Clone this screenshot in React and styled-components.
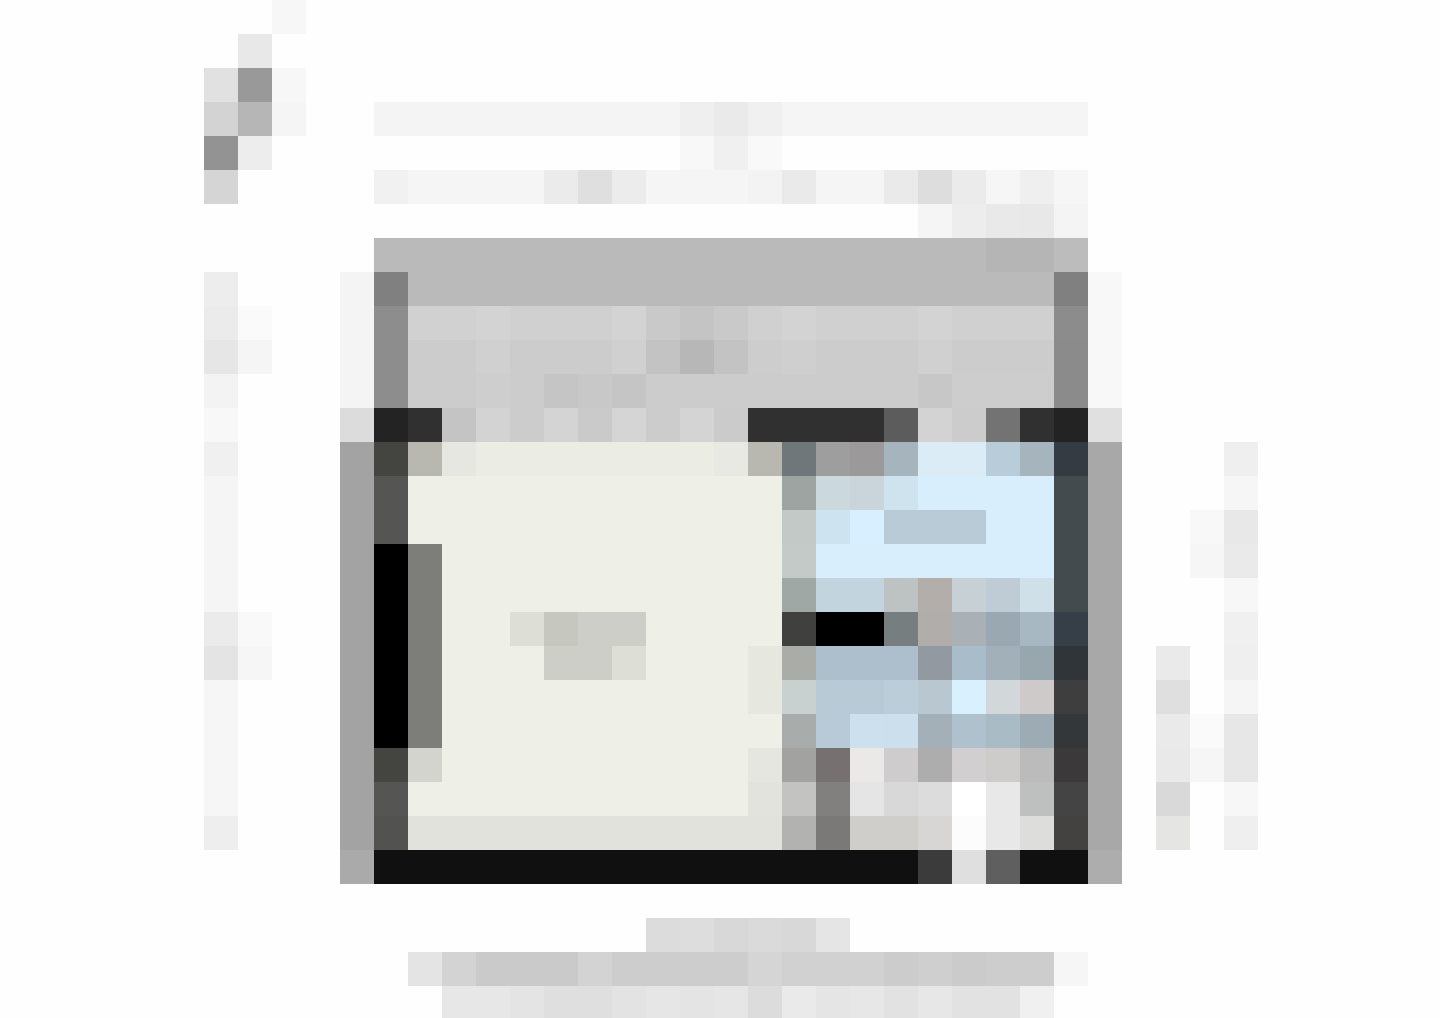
import React from "react";
import styled, { createGlobalStyle } from "styled-components";

const GlobalStyle = createGlobalStyle`
  body {
    margin: 0;
    background: #fefefe;
    font-family: "Liberation Sans", sans-serif;
  }
`;

const Page = styled.main`
  width: 100%;
  overflow: hidden;
`;

const Mosaic = styled.div`
  display: flex;
  flex-direction: column;
`;

/* 31 square tiles between two flexible margins */
const Row = styled.div`
  display: grid;
  grid-template-columns: minmax(0, 204fr) repeat(31, 34px) minmax(0, 182fr);
  height: ${(p) => (p.$last ? 32 : 34)}px;
`;

const Tile = styled.span`
  grid-row: 1;
  grid-column: ${(p) => p.$column} / span ${(p) => p.$span};
  background: ${(p) => p.$color};
`;

/* Each entry is "column[-lastColumn] hex"; two digits stand for a grey. */
const WALL = "10 a3,11 555553,12-22 eeefe6,32 a8";
const WALL_DARK = "10 a3,11 000000,12 7d7d7a,13-22 eeefe6,32 a8";

const ROWS = [
  "8 f7",
  "7 e8",
  "6 e1,7 99,8 f7",
  "6 d3,7 b6,8 f5,11-19 f4,20 ef,21 ea,22 f0,23-31 f5",
  "6 93,7 ed,20 f8,21 f0,22 f9",
  "6 d5,11 f1,12-15 f5,16 eb,17 df,18 ec,19-21 f5,22 f3,23 ea,24-25 f5,26 ea,27 dd,28 eb,29 f6,30 ef,31 f6",
  "27 f5,28 ed,29 e9,30 e8,31 f4",
  "11-28 ba,29-30 b5,31 bc",
  "6 ed,10 f4,11 80,12-30 ba,31 80,32 f8",
  "6 eb,7 fa,10 f4,11 8d,12-13 d1,14 d3,15-17 d0,18 d3,19 c9,20 c4,21 c9,22 d0,23 d3,24-26 d0,27 d3,28-30 d0,31 8c,32 f8",
  "6 e6,7 f5,10 f4,11 8d,12-13 cc,14 d0,15-17 cc,18 d0,19 c3,20 b7,21 c3,22 cd,23 cf,24-26 cc,27 d0,28-30 cc,31 8b,32 f8",
  "6 f3,10 f4,11 8d,12-13 cc,14 ce,15 cc,16 c5,17 c8,18 c5,19-26 cc,27 c7,28-30 cd,31 8b,32 f8",
  "6 f8,10 dc,11 23,12 30,13 c4,14 d3,15 cc,16 d4,17 ca,18 d5,19 cc,20 d4,21 cb,22-25 30,26 5c,27 d3,28 cc,29 73,30 30,31 23,32 e0",
  "6 f0,10 a3,11 444440,12 b8b8b1,13 e6e7e1,14-20 ebece4,21 e8e9e3,22 b8b7b0,23 70777a,24 9e9e9f,25 9b9999,26 a6b4be,27-28 dbecf7,29 b9ccda,30 a6b4be,31 353b42,32 a8,36 ef",
  `6 f5,${WALL},23 9da4a2,24 cbd8de,25 c9d5da,26 cfe3ef,27-30 d8eefd,31 434b4f,36 f6`,
  `6 f5,${WALL},23 c3c9c7,24 cde3f0,25 d7effe,26-28 b9cbd7,29-30 d8eefd,31 434b4f,35 f8,36 e8`,
  `6 f5,${WALL_DARK},23 c4cac8,24-30 d8eefd,31 434b4f,35 f6,36 ea`,
  `6 f5,${WALL_DARK},23 a0a8a6,24-25 c2d4de,26 bcc3c2,27 b3aeaa,28 c7d1d5,29 bfccd5,30 cfe0e9,31 434b4f,36 f7`,
  "6 eb,7 f9,10 a3,11 000000,12 7d7d7a,13-14 eeefe6,15 dddfd7,16 c6c8c0,17-18 cccec7,19-22 eeefe6,23 40413f,24-25 00,26 777e80,27 b1adab,28 aab1b6,29 9aa8b1,30 a8b8c3,31 363f47,32 a8,36 f0",
  "6 e4,7 f6,10 a3,11 000000,12 7d7d7a,13-15 eeefe6,16-17 cccec7,18 dddfd7,19-21 eeefe6,22 e6e7df,23 aaaca8,24-26 adbfcc,27 9299a1,28 a9bcca,29 a2b0b9,30 98a6ae,31 303539,32 a8,34 ea,36 ef",
  "6 f6,10 a3,11 000000,12 7d7d7a,13-21 eeefe6,22 e6e7df,23 c9d1d0,24-25 b7cad5,26 bbcdd8,27 b9c7d0,28 d9f0ff,29 d2d8da,30 cecaca,31 3e,32 a8,34 df,36 f5",
  `6 f6,${WALL_DARK},23 a8acaa,24 b8cad8,25 cde0ed,26 cbdfec,27 a3b0b8,28 aec1cd,29 a9bcc6,30 9dabb4,31 333739,34 ea,35 fa,36 e7`,
  "6 f6,10 a3,11 444440,12 d3d4ce,13-21 eeefe6,22 e5e6e0,23 a2a3a1,24 767170,25 ebe9e8,26 cfcccd,27 ad,28 d1cfcf,29 cecbcb,30 bb,31 3b3939,32 a8,34 e9,35 f6,36 e7",
  "6 f6,10 a3,11 555553,12-21 eeefe6,22 e2e3dd,23 c3c4c2,24 82807e,25 e5,26 d8,27 dc,28 ff,29 e8,30 bebfbf,31 44,32 a8,34 d9,36 f7",
  "6 ee,10 a3,11 525250,12-22 e1e2dc,23 b2b2b0,24 7b7977,25-26 d0cecb,27 d7d6d5,28 fc,29 e8,30 dddedb,31 434241,32 a8,34 e5e5e3,36 ef",
  "10 aa,11-26 10,27 3b,28 df,29 5f,30-31 10,32 ad",
  "",
  "19 dc,20 dd,21 d8,22 da,23 d8,24 e5",
  "12 e4,13 d3,14-16 ca,17 d3,18-21 cd,22 d5,23 d1,24-25 d1,26 cc,27 cf,28 cb,29-30 cd,31 f6",
  "13-14 e7,15 e4,16-17 df,18 e3,19 e6,20 e4,21 e6,22 dc,23 ea,24 e5,25 e7,26 e2,27 e7,28-29 e2,30 f0",
];

const FIRST_TILE_COLUMN = 6;

function parseRow(row) {
  if (!row) return [];
  return row.split(",").map((entry) => {
    const [range, hex] = entry.split(" ");
    const [start, end = start] = range.split("-").map(Number);
    return {
      column: start - FIRST_TILE_COLUMN + 2,
      span: end - start + 1,
      color: `#${hex.length === 2 ? hex.repeat(3) : hex}`,
    };
  });
}

export default function App() {
  return (
    <>
      <GlobalStyle />
      <Page>
        <Mosaic>
          {ROWS.map((row, index) => (
            <Row key={index} $last={index === ROWS.length - 1}>
              {parseRow(row).map((tile) => (
                <Tile
                  key={tile.column}
                  $column={tile.column}
                  $span={tile.span}
                  $color={tile.color}
                />
              ))}
            </Row>
          ))}
        </Mosaic>
      </Page>
    </>
  );
}
